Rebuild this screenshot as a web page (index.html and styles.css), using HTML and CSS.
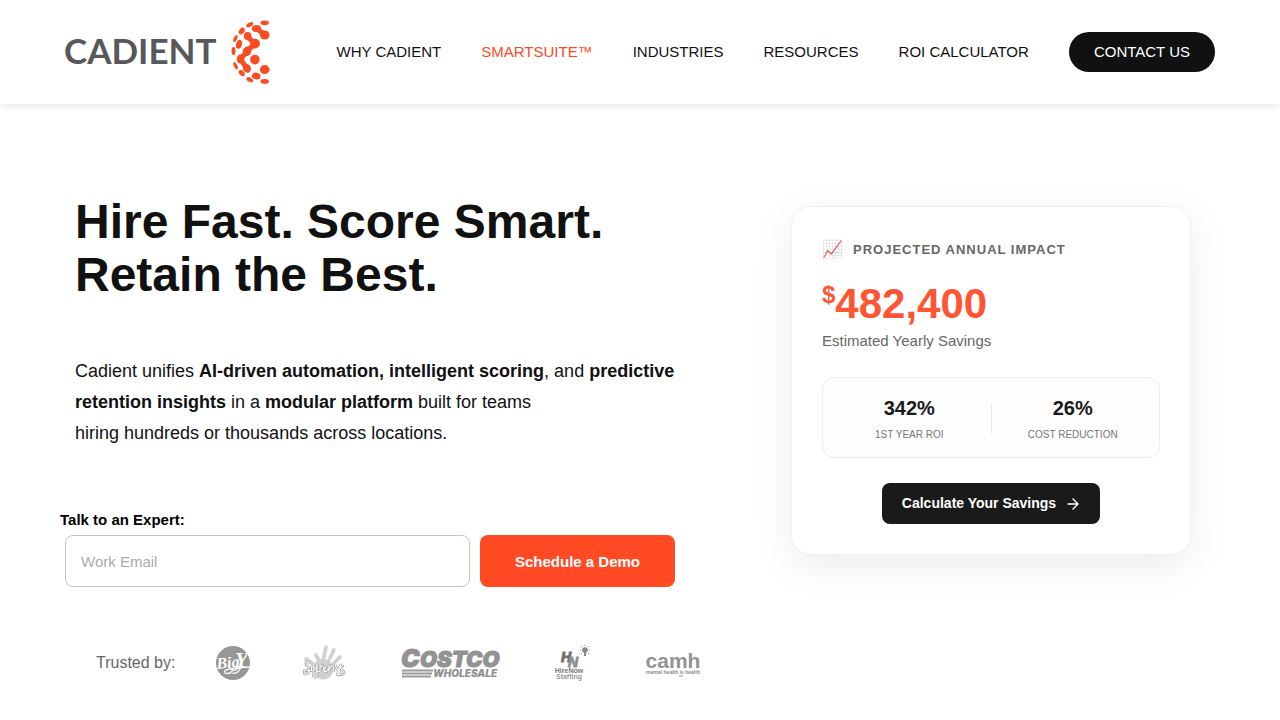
FILE: index.html
```html
<!DOCTYPE html>
<html lang="en">
<head>
    <meta charset="UTF-8">
    <meta name="viewport" content="width=device-width, initial-scale=1.0">
    <title>Cadient</title>
    <link rel="stylesheet" href="styles.css">
</head>
<body>
    <header class="site-header">
        <a href="#" class="logo" aria-label="Cadient">
            <svg width="205" height="64" viewBox="0 0 205 64">
                <text class="logo-text" x="-1" y="44">CADIENT</text>
                <g fill="#f94c22">
                    <ellipse cx="199.7" cy="2.8" rx="4.2" ry="2.4"/>
                    <ellipse cx="184.7" cy="4.7" rx="3.7" ry="2" transform="rotate(-28 184.7 4.7)"/>
                    <ellipse cx="176.7" cy="11" rx="2.6" ry="3.7" transform="rotate(38 176.7 11)"/>
                    <ellipse cx="191.5" cy="8.5" rx="4.6" ry="3.5"/>
                    <ellipse cx="199.7" cy="15" rx="4.8" ry="4.5"/>
                    <ellipse cx="182.6" cy="16" rx="3.8" ry="4.1"/>
                    <ellipse cx="190" cy="23.6" rx="5" ry="4.8"/>
                    <ellipse cx="174" cy="24.3" rx="2.9" ry="4.5" transform="rotate(18 174 24.3)"/>
                    <ellipse cx="170.4" cy="18.6" rx="1.7" ry="3.7" transform="rotate(25 170.4 18.6)"/>
                    <ellipse cx="168.5" cy="31" rx="2" ry="4.1"/>
                    <ellipse cx="182" cy="31.2" rx="4.2" ry="4.8" transform="rotate(20 182 31.2)"/>
                    <ellipse cx="175.5" cy="39" rx="3.8" ry="4.6"/>
                    <circle cx="189.9" cy="39.6" r="4.8"/>
                    <ellipse cx="182" cy="48.4" rx="3.9" ry="4.5" transform="rotate(-25 182 48.4)"/>
                    <ellipse cx="170.6" cy="45.7" rx="1.7" ry="3.8" transform="rotate(-25 170.6 45.7)"/>
                    <ellipse cx="176.7" cy="53" rx="2.5" ry="3.6" transform="rotate(-40 176.7 53)"/>
                    <ellipse cx="199.7" cy="49.6" rx="4.8" ry="4.5"/>
                    <ellipse cx="191.2" cy="56" rx="4.3" ry="3.3" transform="rotate(12 191.2 56)"/>
                    <ellipse cx="184.8" cy="59.7" rx="3.7" ry="2" transform="rotate(28 184.8 59.7)"/>
                    <ellipse cx="199.7" cy="61.4" rx="4.2" ry="2.4"/>
                </g>
                <path d="M192 9l7 5M183 17l6 6M189 25l-6 5M181 33l-5 5M176 40l5 7" fill="none" stroke="#f94c22" stroke-width="5"/>
            </svg>
        </a>
        <nav class="main-nav">
            <a href="#">WHY CADIENT</a>
            <a href="#" class="active">SMARTSUITE™</a>
            <a href="#">INDUSTRIES</a>
            <a href="#">RESOURCES</a>
            <a href="#">ROI CALCULATOR</a>
            <a href="#" class="contact-btn">CONTACT US</a>
        </nav>
    </header>

    <main class="hero">
        <section class="hero-content">
            <h1>Hire Fast. Score Smart.<br>Retain the Best.</h1>
            <p class="hero-text">Cadient unifies <strong>AI-driven automation, intelligent scoring</strong>, and <strong>predictive retention insights</strong> in a <strong>modular platform</strong> built for teams<br>hiring hundreds or thousands across locations.</p>
            <form class="demo-form">
                <label for="work-email">Talk to an Expert:</label>
                <div class="form-row">
                    <input type="email" id="work-email" placeholder="Work Email">
                    <button type="submit">Schedule a Demo</button>
                </div>
            </form>
            <div class="trusted">
                <span>Trusted by:</span>
                <div class="trusted-logos">
                    <!-- Big Y -->
                    <svg width="36" height="36" viewBox="0 0 36 36">
                        <circle cx="17" cy="18" r="17" fill="#969696"/>
                        <g class="bigy-text">
                            <text x="1" y="24" font-size="16" transform="rotate(-6 1 24)">Big</text>
                            <text x="19" y="22" font-size="21">Y</text>
                        </g>
                        <path d="M17 24Q15 30 9 28Q7 25 14 24Q25 22 34 22M26 20Q22 30 16 28" fill="none" stroke="#fff" stroke-width="1.3"/>
                    </svg>
                    <!-- hand print -->
                    <svg width="64" height="36" viewBox="0 0 64 36">
                        <g fill="none" stroke="#d0d0d0" stroke-width="3.6" stroke-linecap="round">
                            <path d="M28 18L24 10M31 16L34 2M36 17L42 5M39 21L48 12M25 22L14 14"/>
                        </g>
                        <path d="M24 16Q32 11 39 18Q43 24 39 31Q33 37 26 33Q20 25 24 16Z" fill="#d0d0d0"/>
                        <path d="M18 18Q13 15 14 20Q19 23 16 28Q12 31 12 26Q16 25 22 26M20 21Q18 27 22 26Q25 23 25 19V31Q22 35 21 29Q24 26 28 26M28 20V27M28 22Q32 18 32 27M34 22Q30 25 34 27Q38 23 37 20V28M38 23Q42 17 42 27M43 20L46 26L49 19L45 31M52 21Q46 21 50 25Q55 28 49 30Q45 30 48 26" fill="none" stroke="#8c8c8c" stroke-width="2.4"/>
                        <path d="M18 18Q13 15 14 20Q19 23 16 28Q12 31 12 26Q16 25 22 26M20 21Q18 27 22 26Q25 23 25 19V31Q22 35 21 29Q24 26 28 26M28 20V27M28 22Q32 18 32 27M34 22Q30 25 34 27Q38 23 37 20V28M38 23Q42 17 42 27M43 20L46 26L49 19L45 31M52 21Q46 21 50 25Q55 28 49 30Q45 30 48 26" fill="none" stroke="#fff" stroke-width="1.2"/>
                    </svg>
                    <!-- Costco -->
                    <svg width="112" height="36" viewBox="0 0 112 36">
                        <g class="costco-text">
                            <text x="5" y="22" font-size="25">C</text>
                            <text x="24" y="22" font-size="22">OSTCO</text>
                        </g>
                        <text class="wholesale-text" x="37" y="32">WHOLESALE</text>
                        <path d="M6 25.5h31M6 28.5h30M6 31.5h29" stroke="#999" stroke-width="1.8"/>
                    </svg>
                    <!-- HireNow Staffing -->
                    <svg width="50" height="36" viewBox="0 0 50 36">
                        <g class="hirenow-mark">
                            <text x="13" y="17" fill="#6e6e6e" stroke="#6e6e6e">H</text>
                            <text x="20" y="22" fill="#909090" stroke="#909090">N</text>
                        </g>
                        <circle cx="37" cy="5" r="2.8" fill="#888"/>
                        <path d="M36 7h2v4h-2z" fill="#888"/>
                        <path d="M37 0v1M33 1l1 1M41 1l-1 1M32 5h1M41 5h1M33 9l1-1M41 9l-1-1" stroke="#999"/>
                        <g class="hirenow-text">
                            <text x="21" y="28" fill="#777">HireNow</text>
                            <text x="21" y="34" fill="#999">Staffing</text>
                        </g>
                    </svg>
                    <!-- camh -->
                    <svg width="70" height="36" viewBox="0 0 70 36">
                        <text class="camh-text" x="35" y="23">camh</text>
                        <text class="camh-tag" x="35" y="29">mental health is health</text>
                        <path d="M41 31h4" stroke="#999"/>
                    </svg>
                </div>
            </div>
        </section>

        <aside class="impact-card">
            <div class="impact-title"><span class="impact-icon">📈</span>PROJECTED ANNUAL IMPACT</div>
            <div class="impact-amount"><span class="currency">$</span>482,400</div>
            <div class="impact-label">Estimated Yearly Savings</div>
            <div class="stats">
                <div class="stat">
                    <strong>342%</strong>
                    <span>1ST YEAR ROI</span>
                </div>
                <div class="divider"></div>
                <div class="stat">
                    <strong>26%</strong>
                    <span>COST REDUCTION</span>
                </div>
            </div>
            <a href="#" class="calc-btn">
                Calculate Your Savings
                <svg width="14" height="14" viewBox="0 0 14 14">
                    <path d="M2 7h10M7 2l5 5-5 5" fill="none" stroke="#fff" stroke-width="1.4" stroke-linecap="round" stroke-linejoin="round"/>
                </svg>
            </a>
        </aside>
    </main>
</body>
</html>
```

FILE: styles.css
```css
* {
    box-sizing: border-box;
}
body {
    font-family: "Liberation Sans", Arial, sans-serif;
    background: #fff;
    color: #111;
    margin: 0;
}
a {
    text-decoration: none;
}
.site-header {
    display: flex;
    align-items: center;
    justify-content: space-between;
    padding: 20px 65px;
    box-shadow: 0 2px 8px rgba(0, 0, 0, 0.1);
}
.logo svg {
    display: block;
    overflow: visible;
}
.logo-text {
    font: 700 35px Lato, sans-serif;
    fill: #58585a;
}
.main-nav {
    display: flex;
    align-items: center;
    gap: 40px;
}
.main-nav a {
    color: #111;
    font-size: 15px;
    line-height: 18px;
}
.main-nav .active {
    color: #ff4a24;
}
.main-nav .contact-btn {
    background: #111;
    color: #fff;
    padding: 11px 25px;
    border-radius: 20px;
}
.hero {
    display: grid;
    grid-template-columns: 1fr 400px;
    align-items: start;
    padding: 91px 89px 0 60px;
}
.hero h1 {
    font-size: 48px;
    line-height: 53px;
    margin: 0 0 55px;
    padding-left: 15px;
}
.hero-text {
    font-size: 18px;
    line-height: 31px;
    max-width: 630px;
    margin: 0 0 62px;
    padding-left: 15px;
}
.demo-form label {
    display: block;
    font-size: 15px;
    line-height: 17px;
    font-weight: bold;
    color: #000;
    margin-bottom: 7px;
}
.form-row {
    display: flex;
    gap: 10px;
    max-width: 620px;
    padding: 0 5px;
}
.form-row input {
    flex: 1;
    height: 52px;
    padding: 0 15px;
    border: 1px solid #c4c4c4;
    border-radius: 8px;
    font-family: inherit;
    font-size: 15px;
}
.form-row input::placeholder {
    color: #aaa;
}
.form-row button {
    padding: 0 35px;
    border: 0;
    border-radius: 8px;
    background: #ff4a24;
    color: #fff;
    font-family: inherit;
    font-size: 15px;
    font-weight: bold;
    cursor: pointer;
}
.trusted {
    display: flex;
    align-items: center;
    gap: 41px;
    margin-top: 58px;
    padding-left: 36px;
    color: #666;
    font-size: 16px;
}
.trusted-logos {
    display: flex;
    gap: 40px;
}
.trusted-logos svg {
    overflow: visible;
}
.bigy-text {
    font-family: "Liberation Serif", serif;
    font-style: italic;
    font-weight: bold;
    fill: #fff;
}
.costco-text {
    font-family: Inter, sans-serif;
    font-style: italic;
    font-weight: 900;
    fill: #929292;
    stroke: #929292;
    stroke-width: 1px;
}
.wholesale-text {
    font: italic 900 10px Inter, sans-serif;
    fill: #929292;
}
.hirenow-mark {
    font: italic bold 14px "Liberation Sans", sans-serif;
    stroke-width: 1px;
}
.hirenow-text {
    font: bold 7px "Liberation Sans", sans-serif;
    text-anchor: middle;
}
.camh-text {
    font: bold 21px "Liberation Sans", sans-serif;
    fill: #929292;
    text-anchor: middle;
}
.camh-tag {
    font: bold 5px "Liberation Sans", sans-serif;
    fill: #888;
    text-anchor: middle;
}
.impact-card {
    margin-top: 11px;
    padding: 30px;
    border: 1px solid #f0f0f0;
    border-radius: 20px;
    background: #fff;
    box-shadow: 0 10px 40px rgba(0, 0, 0, 0.08);
}
.impact-title {
    display: flex;
    align-items: center;
    gap: 10px;
    height: 24px;
    color: #666;
    font-size: 13px;
    font-weight: bold;
    letter-spacing: 1px;
}
.impact-icon {
    font-size: 17px;
    font-weight: normal;
    letter-spacing: 0;
}
.impact-amount {
    display: flex;
    align-items: flex-start;
    margin-top: 22px;
    color: #ff5533;
    font-size: 42px;
    line-height: 42px;
    font-weight: bold;
}
.currency {
    font-size: 24px;
    line-height: 24px;
}
.impact-label {
    margin-top: 7px;
    color: #666;
    font-size: 15px;
    line-height: 17px;
}
.stats {
    display: flex;
    align-items: center;
    gap: 15px;
    margin: 28px 0 25px;
    padding: 19px 20px 16px;
    border: 1px solid #eee;
    border-radius: 12px;
    background: #fdfdfd;
}
.stat {
    flex: 1;
    text-align: center;
}
.stat strong {
    display: block;
    margin-bottom: 9px;
    font-size: 20px;
    line-height: 23px;
    color: #1a1a1a;
}
.stat span {
    display: block;
    color: #777;
    font-size: 10px;
    line-height: 12px;
}
.divider {
    width: 1px;
    height: 30px;
    background: #e8e8e8;
}
.calc-btn {
    display: flex;
    align-items: center;
    gap: 10px;
    width: fit-content;
    margin: 0 auto;
    padding: 12px 20px;
    border-radius: 8px;
    background: #1a1a1a;
    color: #fff;
    font-size: 14px;
    line-height: 17px;
    font-weight: bold;
}
```
